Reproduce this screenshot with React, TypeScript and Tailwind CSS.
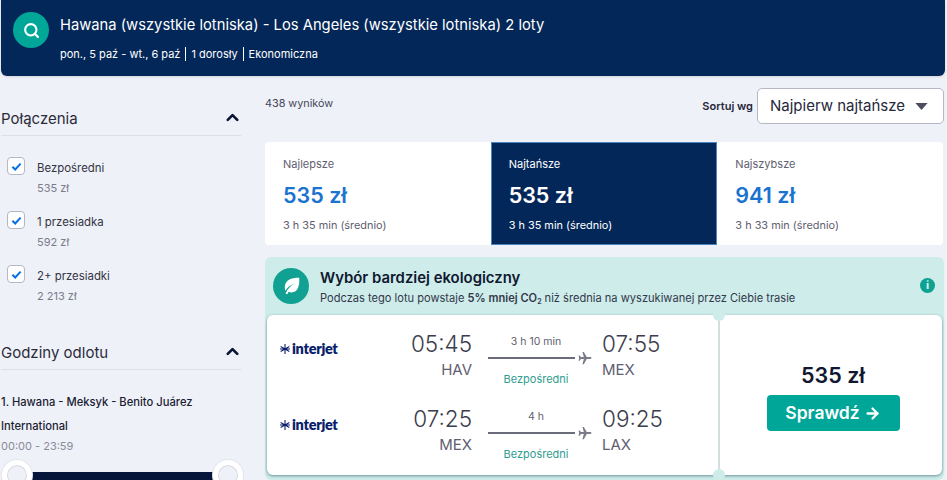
import { ArrowRight, ChevronUp, Search } from "lucide-react"

const font = { fontFamily: "Inter, 'Noto Sans', sans-serif" }

function Check() {
  return (
    <div className="mt-[-2px] flex size-[18px] shrink-0 items-center justify-center rounded-[4px] border border-[#b5b7c4] bg-white">
      <svg viewBox="0 0 12 12" className="size-[11px]">
        <path d="M1.5 6.2 4.6 9.2 10.5 2.8" fill="none" stroke="#0770e3" strokeWidth="2.2" />
      </svg>
    </div>
  )
}

function FilterRow({ label, price }: { label: string; price: string }) {
  return (
    <div className="flex h-[54px] gap-[12px] pl-[6px]">
      <Check />
      <div className="pt-[1px]">
        <div className="text-[11.4px] leading-[16px] text-[#333544]">{label}</div>
        <div className="mt-[4px] text-[11px] leading-[16px] text-[#7a7b8b]">{price}</div>
      </div>
    </div>
  )
}

function SectionTitle({ children }: { children: string }) {
  return (
    <div className="flex h-[36px] items-center justify-between border-b border-[#dcdfe6]">
      <span className="pt-[4px] text-[15px] text-[#2b2c3a]">{children}</span>
      <ChevronUp className="mr-[-1px] size-[19px] text-[#0b1535]" strokeWidth={3.4} />
    </div>
  )
}

function Tab({ title, price, time, active }: { title: string; price: string; time: string; active?: boolean }) {
  return (
    <div
      className={
        active
          ? "h-[103px] w-[227px] border border-[#4b85c4] bg-[#042759] pl-[17px] pt-[13px] text-white"
          : "h-[103px] w-[226px] bg-white pl-[18px] pt-[14px] text-[#5f6070]"
      }
    >
      <div className="text-[11px] leading-[16px]">{title}</div>
      <div className={`mt-[8px] text-[21.5px] font-semibold leading-[30px] ${active ? "text-white" : "text-[#1a73cf]"}`}>{price}</div>
      <div className="mt-[7px] text-[10.9px] leading-[16px]">{time}</div>
    </div>
  )
}

function Logo() {
  return (
    <div className="flex w-[102px] items-center text-[#0a1f6b]">
      <svg viewBox="0 0 12 12" className="mr-[2px] size-[10px] shrink-0">
        <path d="M6 0v12M.8 3l10.4 6M.8 9l10.4-6M0 6h12" stroke="#0a1f6b" strokeWidth="1.3" />
      </svg>
      <span className="text-[14.5px] font-extrabold leading-none tracking-[-0.3px]" style={{ fontFamily: "Lato, sans-serif" }}>
        interjet
      </span>
    </div>
  )
}

function Plane() {
  return (
    <svg viewBox="0 0 24 24" className="ml-[3px] size-[14px] shrink-0 text-[#7b7c8a]" fill="currentColor">
      <path d="M23 12c0-1-1-1.6-2-1.6h-6L10 1.5H7.6l2.4 8.9H5L3 7.5H1l1 4.5-1 4.5h2l2-2.9h5l-2.4 8.9H10l5-8.9h6c1 0 2-.6 2-1.6z" />
    </svg>
  )
}

function Leg({ from, to, dep, arr, dur, logoGap }: { from: string; to: string; dep: string; arr: string; dur: string; logoGap: string }) {
  return (
    <div className="flex h-[69px] items-start">
      <div className={logoGap}>
        <Logo />
      </div>
      <div className="w-[90px] text-right">
        <div className="pt-[1px] text-[22.5px] font-light leading-[30px] text-[#3c3d4c]">{dep}</div>
        <div className="mt-[1px] text-[15px] leading-[20px] text-[#5f6070]">{from}</div>
      </div>
      <div className="ml-[16px] w-[104px]">
        <div className="h-[16px] pr-[8px] pt-[6px] text-center text-[10.5px] leading-[16px] text-[#5f6070]">{dur}</div>
        <div className="mt-[7px] flex h-[14px] items-center">
          <div className="h-[2px] w-[87px] bg-[#6b6c7b]" />
          <Plane />
        </div>
        <div className="mt-[6px] pr-[8px] text-center text-[11px] leading-[16px] text-[#2f9d8f]">Bezpośredni</div>
      </div>
      <div className="ml-[10px]">
        <div className="pt-[1px] text-[22.5px] font-light leading-[30px] text-[#3c3d4c]">{arr}</div>
        <div className="mt-[1px] text-[15px] leading-[20px] text-[#5f6070]">{to}</div>
      </div>
    </div>
  )
}

export default function App() {
  return (
    <div className="h-[480px] w-[947px] overflow-hidden bg-[#eff1f8]" style={font}>
      <header className="mx-[1px] flex h-[76px] w-[944px] items-start rounded-b-[6px] bg-[#042759] pl-[12px] pt-[12px] text-white shadow-sm">
        <div className="flex size-[36px] items-center justify-center rounded-full bg-[#00a698]">
          <Search className="size-[17px]" strokeWidth={3} />
        </div>
        <div className="ml-[11px]">
          <div className="text-[14.75px] leading-[26px]">Hawana (wszystkie lotniska) - Los Angeles (wszystkie lotniska) 2 loty</div>
          <div className="mt-[8px] flex items-center text-[11px] leading-[16px]">
            <span>pon., 5 paź - wt., 6 paź</span>
            <span className="mx-[5px] h-[14px] w-px bg-white" />
            <span>1 dorosły</span>
            <span className="mx-[5px] h-[14px] w-px bg-white" />
            <span>Ekonomiczna</span>
          </div>
        </div>
      </header>

      <div className="flex">
        <aside className="ml-[1px] w-[240px] pt-[24px]">
          <SectionTitle>Połączenia</SectionTitle>
          <div className="mt-[23px]">
            <FilterRow label="Bezpośredni" price="535 zł" />
            <FilterRow label="1 przesiadka" price="592 zł" />
            <FilterRow label="2+ przesiadki" price="2 213 zł" />
          </div>
          <div className="mt-[13px]">
            <SectionTitle>Godziny odlotu</SectionTitle>
          </div>
          <div className="mt-[20px] text-[11.2px] font-medium leading-[24px] text-[#1c1d33]">1. Hawana - Meksyk - Benito Juárez International</div>
          <div className="text-[11px] leading-[16px] text-[#8a8b99]">00:00 - 23:59</div>
          <div className="relative mt-[6px] h-[30px]">
            <div className="ml-[29px] mt-[12px] inline-block h-[8px] w-[184px] bg-[#06163a]" />
            <div className="absolute left-[1px] top-0 size-[30px] rounded-full border-[5px] border-white bg-[#eff1f8] shadow-[0_0_0_1px_#d5d7e0_inset,0_0_0_1px_#e4e6ee]" />
            <div className="absolute left-[212px] top-0 size-[30px] rounded-full border-[5px] border-white bg-[#eff1f8] shadow-[0_0_0_1px_#d5d7e0_inset,0_0_0_1px_#e4e6ee]" />
          </div>
        </aside>

        <main className="ml-[24px] w-[678px]">
          <div className="flex h-[66px] items-start justify-between">
            <div className="mt-[20px] text-[10.8px] leading-[16px] text-[#44455a]">438 wyników</div>
            <div className="mr-[-1px] mt-[12px] flex items-center">
              <span className="mr-[4px] text-[11px] font-semibold text-[#26273a]">Sortuj wg</span>
              <div className="flex h-[36px] w-[187px] items-center justify-between rounded-[5px] border border-[#b5b7c4] bg-white pl-[12px] pr-[15px] text-[15px] text-[#26273a]">
                <span>Najpierw najtańsze</span>
                <svg viewBox="0 0 14 8" className="h-[7px] w-[13px]">
                  <path d="M0 0h14L7 8z" fill="#4b4c5e" />
                </svg>
              </div>
            </div>
          </div>

          <div className="flex w-[678px] overflow-hidden rounded-[4px]">
            <Tab title="Najlepsze" price="535 zł" time="3 h 35 min (średnio)" />
            <Tab title="Najtańsze" price="535 zł" time="3 h 35 min (średnio)" active />
            <Tab title="Najszybsze" price="941 zł" time="3 h 33 min (średnio)" />
          </div>

          <section className="mt-[12px] h-[223px] w-[679px] rounded-[6px] bg-[#cdecea] px-[2px]">
            <div className="relative flex h-[58px] items-start pl-[6px] pt-[11px]">
              <div className="flex size-[36px] items-center justify-center rounded-full bg-[#11a193]">
                <svg viewBox="0 0 24 24" className="size-[22px]" fill="white">
                  <path d="M21 3C12 3 5.5 5.5 5.2 13.5c0 1.4.3 2.6.8 3.6C8 13.5 11 11 15 9.5c-3.5 2.4-6.6 5.6-9 10.6l2 .9 1.3-2.6c1 .4 2 .6 3 .6C20 19 21.5 11 21 3z" />
                </svg>
              </div>
              <div className="ml-[11px]">
                <div className="text-[14.9px] font-semibold leading-[20px] text-[#10182f]">Wybór bardziej ekologiczny</div>
                <div className="mt-[2px] whitespace-nowrap text-[11.1px] leading-[16px] text-[#33384a]">
                  Podczas tego lotu powstaje <b className="font-semibold">5% mniej CO<sub className="text-[7px]">2</sub></b> niż średnia na wyszukiwanej przez Ciebie trasie
                </div>
              </div>
              <div className="absolute right-[7px] top-[21px] flex size-[15px] items-center justify-center rounded-full bg-[#0ea192] text-[11px] font-extrabold leading-none text-[#cdecea]">
                i
              </div>
            </div>
            <div className="relative flex h-[160px] rounded-[6px] bg-white shadow-[0_1px_3px_rgba(30,70,80,0.55)]">
              <div className="w-[453px] pl-[13px] pt-[13px]">
                <Leg from="HAV" to="MEX" dep="05:45" arr="07:55" dur="3 h 10 min" logoGap="pt-[14px]" />
                <div className="h-[6px]" />
                <Leg from="MEX" to="LAX" dep="07:25" arr="09:25" dur="4 h" logoGap="pt-[15px]" />
              </div>
              <div className="absolute left-[451px] top-0 h-[160px] w-[2px] bg-[#d3dede]" />
              <div className="absolute left-[446px] top-[-6px] size-[12px] rounded-full bg-[#cdecea]" />
              <div className="absolute bottom-[-6px] left-[446px] size-[12px] rounded-full bg-[#cdecea]" />
              <div className="flex flex-1 flex-col items-center pl-[4px] pt-[45px]">
                <div className="text-[21.5px] font-semibold leading-[30px] text-[#10182f]">535 zł</div>
                <div className="mt-[5px] flex h-[36px] w-[133px] items-center justify-center gap-[4px] rounded-[4px] bg-[#00a698] text-[17.5px] font-semibold text-white">
                  Sprawdź
                  <ArrowRight className="size-[17px]" strokeWidth={3.2} />
                </div>
              </div>
            </div>
          </section>
        </main>
      </div>
    </div>
  )
}
